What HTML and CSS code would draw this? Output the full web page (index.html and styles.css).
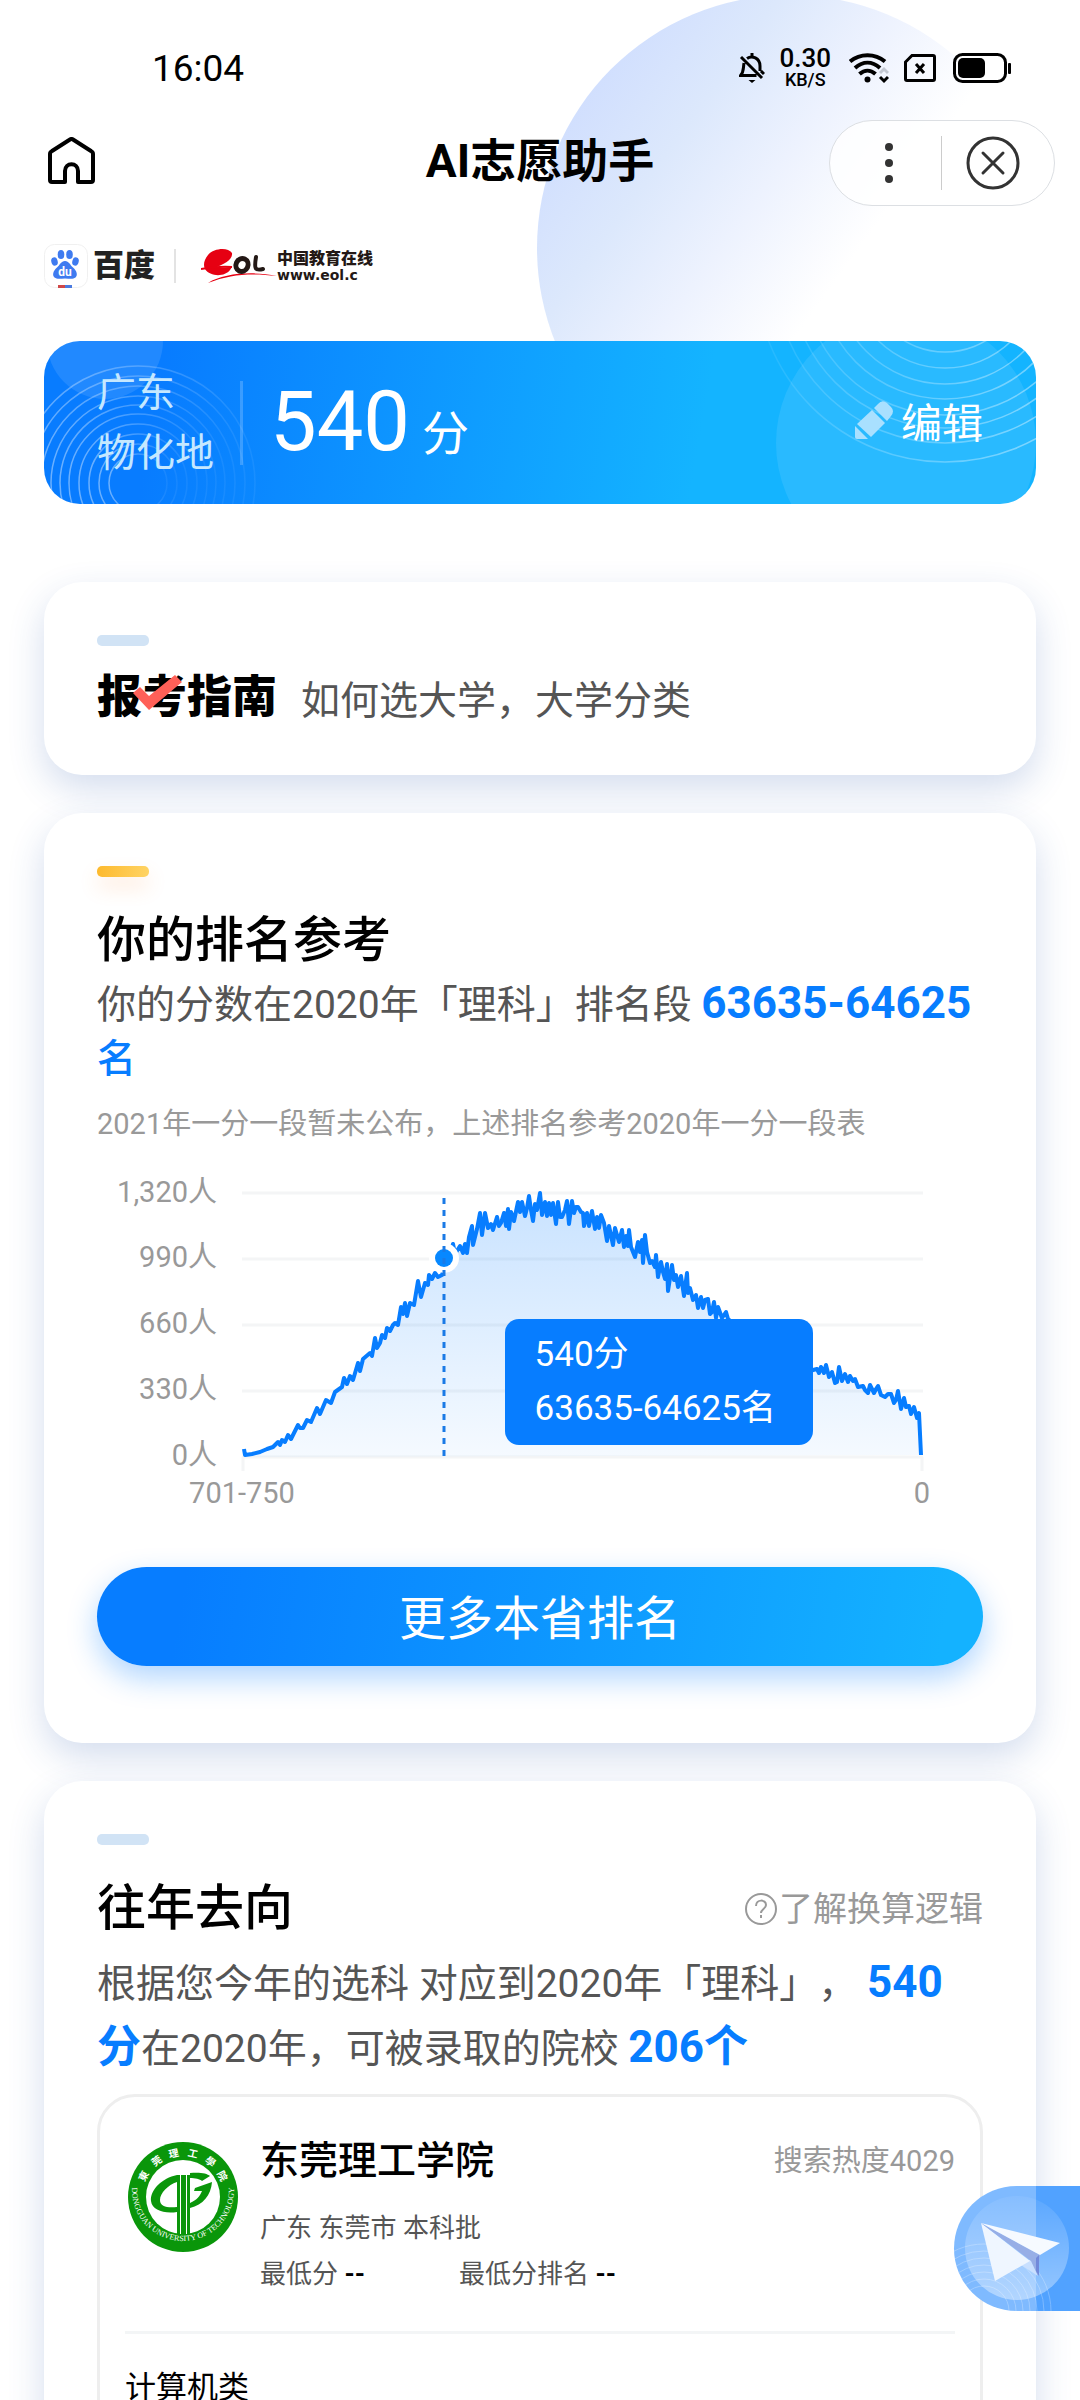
FILE: index.html
```
<!DOCTYPE html>
<html lang="zh-CN">
<head>
    <meta charset="UTF-8">
    <meta name="viewport" content="width=device-width, initial-scale=1.0">
    <title>AI志愿助手</title>
    <link rel="stylesheet" href="styles.css">
</head>
<body>
    <div class="page">
        <div class="page-glow"></div>

        <div class="status-bar">
            <span class="time">16:04</span>
            <div class="status-icons">
                <svg class="bell" width="26" height="32" viewBox="0 0 26 32" fill="none" stroke="#000" stroke-width="3">
                    <path d="M8 6.500C13 3 21 6 21 14v5M5 11c-1 6 0 9-3.500 12.500h16M2 5l21 21M25 22l-3-3M13 1v3"/>
                    <path d="M9.500 28h7l-3.500 3z" fill="#000" stroke="none"/>
                </svg>
                <div class="speed"><b>0.30</b><span>KB/S</span></div>
                <svg class="wifi" width="40" height="32" viewBox="0 0 40 32" fill="none" stroke="#000" stroke-width="4">
                    <path d="M1 9.500C11 1 26 1 36 9.500M6 16c8-7 17-7 25 0M10.500 22c5-4.500 11-4.500 16 0"/>
                    <circle cx="18.500" cy="27.500" r="3" fill="#000" stroke="none"/>
                    <path d="M31 21l4-4 4 4" stroke="#c3c8d2" stroke-width="3"/>
                    <path d="M31 25l4 4 4-4" stroke-width="3"/>
                </svg>
                <svg class="sim" width="32" height="28" viewBox="0 0 32 28" fill="none" stroke="#000" stroke-width="3">
                    <path d="M8 1.500h21q1.500 0 1.500 1.500v22q0 1.500-1.500 1.500H3q-1.500 0-1.500-1.500V8z"/>
                    <path d="M12 10l8 9M20 10l-8 9"/>
                </svg>
                <svg width="58" height="31" viewBox="0 0 58 31">
                    <rect x="1.500" y="1.500" width="51" height="27" rx="8" fill="none" stroke="#000" stroke-width="3"/>
                    <rect x="5" y="5" width="27" height="20" rx="5"/>
                    <rect x="55" y="10" width="3" height="11" rx="1"/>
                </svg>
            </div>
        </div>

        <header class="nav">
            <button class="home" aria-label="首页">
                <svg width="47" height="47" viewBox="0 0 47 47" fill="none" stroke="#000" stroke-width="4" stroke-linejoin="round">
                    <path d="M17 45H4q-2 0-2-2V17q0-2 2-3L22 2.500q1.500-1 3 0L43 14q2 1 2 3v26q0 2-2 2H30V34c0-9-13-9-13 0z"/>
                    <path d="M19 45.500h9" stroke="#fff" stroke-width="4"/>
                </svg>
            </button>
            <h1>AI志愿助手</h1>
            <div class="capsule">
                <button aria-label="更多">
                    <svg width="52" height="52" viewBox="0 0 52 52" fill="#333">
                        <circle cx="26" cy="10" r="4"/><circle cx="26" cy="26" r="4"/><circle cx="26" cy="42" r="4"/>
                    </svg>
                </button>
                <button aria-label="关闭">
                    <svg width="54" height="54" viewBox="0 0 54 54" fill="none" stroke="#333" stroke-width="3" stroke-linecap="round">
                        <circle cx="27" cy="27" r="25"/>
                        <path d="M17 17l20 20M37 17L17 37"/>
                    </svg>
                </button>
            </div>
        </header>

        <div class="brands">
            <svg width="44" height="44" viewBox="0 0 44 44">
                <rect x="0.500" y="0.500" width="43" height="43" rx="10" fill="#fff" stroke="#f0f0f0"/>
                <g fill="#3f7bf0">
                    <ellipse cx="17" cy="10.500" rx="3.300" ry="4.600"/>
                    <ellipse cx="25.500" cy="10.500" rx="3.300" ry="4.600"/>
                    <ellipse cx="10.500" cy="17.500" rx="3.200" ry="4.200" transform="rotate(-15 10.500 17.500)"/>
                    <ellipse cx="31.500" cy="17.500" rx="3.200" ry="4.200" transform="rotate(15 31.500 17.500)"/>
                    <path d="M21 17c4 0 5 4 8 6.500 4 3.500 5 7.500 2.500 10-2.500 2-6 1-10.500 1s-8 1-10.500-1C8 31 9 27 13 23.500c3-2.500 4-6.500 8-6.500z"/>
                </g>
                <text class="du" x="21" y="32">du</text>
                <path d="M14 42.500h7" stroke="#d04848" stroke-width="3"/>
                <path d="M21 42.500h7" stroke="#4a7be0" stroke-width="3"/>
            </svg>
            <span class="baidu">百度</span>
            <span class="brand-line"></span>
            <svg width="76" height="38" viewBox="0 0 76 38">
                <path d="M31 6C27 0 13 1 7 8c-4 5-5 10-3 14 5 8 20 8 25 1l2-3L14 21c9-4 18-8 17-15z" fill="#e60012"/>
                <path d="M0 22c12-2 20-3 31-2" fill="none" stroke="#e60012" stroke-width="2"/>
                <path d="M7 36c16-10 45-12 69-7-26-3-46-2-69 7z" fill="#e60012"/>
                <ellipse cx="41" cy="18" rx="6" ry="6.500" fill="none" stroke="#231815" stroke-width="5" transform="rotate(25 41 18)"/>
                <path d="M55 10c-2 12-1 14 7 12" fill="none" stroke="#231815" stroke-width="4" stroke-linecap="round"/>
            </svg>
            <span class="eol"><b>中国教育在线</b><span>www.eol.c</span></span>
        </div>

        <section class="score">
            <svg class="deco-left" width="220" height="164" viewBox="0 0 220 164" fill="none">
                <defs>
                    <linearGradient id="ringLeft">
                        <stop offset="0" stop-color="#fff" stop-opacity=".4"/>
                        <stop offset="1" stop-color="#fff" stop-opacity=".06"/>
                    </linearGradient>
                </defs>
                <circle cx="61" cy="0" r="58" fill="#fff" opacity=".1"/>
                <g stroke="url(#ringLeft)" stroke-width="1.500">
                    <circle cx="94" cy="142" r="29"/><circle cx="94" cy="142" r="39"/>
                    <circle cx="94" cy="142" r="49"/><circle cx="94" cy="142" r="59"/>
                    <circle cx="94" cy="142" r="69"/><circle cx="94" cy="142" r="78"/>
                    <circle cx="94" cy="142" r="87"/><circle cx="94" cy="142" r="97"/>
                    <circle cx="94" cy="142" r="107"/><circle cx="94" cy="142" r="117"/>
                </g>
            </svg>
            <svg class="deco-right" width="280" height="164" viewBox="0 0 280 164" fill="none">
                <defs>
                    <linearGradient id="ringRight" gradientUnits="userSpaceOnUse" x1="0" y1="0" x2="280" y2="0">
                        <stop offset="0" stop-color="#fff" stop-opacity=".06"/>
                        <stop offset="1" stop-color="#fff" stop-opacity=".4"/>
                    </linearGradient>
                </defs>
                <circle cx="150" cy="102" r="130" fill="#fff" opacity=".09"/>
                <g stroke="url(#ringRight)" stroke-width="1.500">
                    <circle cx="189" cy="-68" r="79"/><circle cx="189" cy="-68" r="95"/>
                    <circle cx="189" cy="-68" r="111"/><circle cx="189" cy="-68" r="126"/>
                    <circle cx="189" cy="-68" r="142"/><circle cx="189" cy="-68" r="155"/>
                    <circle cx="189" cy="-68" r="170"/><circle cx="189" cy="-68" r="189"/>
                </g>
            </svg>
            <div class="subject">广东<br>物化地</div>
            <div class="points"><strong>540</strong><span>分</span></div>
            <button class="edit">
                <svg width="38" height="38" viewBox="0 0 38 38" fill="#a9e0ff">
                    <path d="M19 7l4-4q4-5 9-1l4 4q4 4 0 9l-4 5z"/>
                    <path d="M17 9l13 13L16 36 2 23z"/>
                    <path d="M0 25l13 13H2q-2 0-2-2z"/>
                </svg>
                编辑
            </button>
        </section>

        <main>
            <section class="card guide">
                <i class="tag"></i>
                <div class="guide-row">
                    <h2>报考指南
                        <svg width="50" height="38" viewBox="0 0 50 38"><path d="M0 19l7-6 9 9L42 1l7 7-33 28z" fill="#ff6058"/></svg>
                    </h2>
                    <a href="#">如何选大学，大学分类</a>
                </div>
            </section>

            <section class="card rank">
                <i class="tag gold"></i>
                <h2>你的排名参考</h2>
                <p class="rank-text">你的分数在2020年「理科」排名段 <strong>63635-64625</strong><em>名</em></p>
                <p class="hint">2021年一分一段暂未公布，上述排名参考2020年一分一段表</p>
                <div class="chart">
                    <svg viewBox="0 0 886 356">
                        <defs>
                            <linearGradient id="area" x1="0" y1="0" x2="0" y2="1">
                                <stop offset="0" stop-color="#077dff" stop-opacity=".22"/>
                                <stop offset="1" stop-color="#077dff" stop-opacity=".04"/>
                            </linearGradient>
                        </defs>
                        <path class="grid" d="M145 33h681M145 99h681M145 165h681M145 231h681M145 297h681M146 297v14M825 297v14"/>
                        <g class="y-labels">
                            <text x="120" y="42">1,320人</text>
                            <text x="120" y="107">990人</text>
                            <text x="120" y="173">660人</text>
                            <text x="120" y="239">330人</text>
                            <text x="120" y="305">0人</text>
                        </g>
                        <g class="x-labels">
                            <text x="145" y="343">701-750</text>
                            <text x="825" y="343">0</text>
                        </g>
                        <path id="areaPath" fill="url(#area)"/>
                        <path id="linePath" class="curve"/>
                        <circle cx="347" cy="98" r="15" fill="#fff"/>
                        <circle cx="347" cy="98" r="9" fill="#0788ff"/>
                        <path class="marker" d="M347 38v258"/>
                    </svg>
                    <div class="tooltip">540分<br>63635-64625名</div>
                </div>
                <button class="more">更多本省排名</button>
            </section>

            <section class="card history">
                <i class="tag"></i>
                <div class="history-head">
                    <h2>往年去向</h2>
                    <a href="#">
                        <svg width="32" height="32" viewBox="0 0 32 32" fill="none" stroke="#999" stroke-width="2">
                            <circle cx="16" cy="16" r="15"/>
                            <path d="M11 13c0-7 10-7 10-1 0 4-5 4-5 8M16 22v3"/>
                        </svg>了解换算逻辑</a>
                </div>
                <p class="history-text">根据您今年的选科 对应到2020年「理科」， <strong>540分</strong>在2020年，可被录取的院校 <strong>206个</strong></p>

                <article class="school">
                    <div class="school-head">
                        <svg class="emblem" width="110" height="110" viewBox="0 0 110 110">
                            <defs><path id="ring" d="M4 48a51 51 0 1 0 102 0"/></defs>
                            <circle cx="55" cy="55" r="55" fill="#0a960a"/>
                            <circle cx="55" cy="55" r="37" fill="#fff"/>
                            <g class="seal-cn">
                                <text x="55" y="14" transform="rotate(-62 55 55)">東</text>
                                <text x="55" y="14" transform="rotate(-36 55 55)">莞</text>
                                <text x="55" y="14" transform="rotate(-12 55 55)">理</text>
                                <text x="55" y="14" transform="rotate(13 55 55)">工</text>
                                <text x="55" y="14" transform="rotate(38 55 55)">學</text>
                                <text x="55" y="14" transform="rotate(62 55 55)">院</text>
                            </g>
                            <text class="seal-en"><textPath href="#ring" startOffset="50%">DONGGUAN UNIVERSITY OF TECHNOLOGY</textPath></text>
                            <g fill="#0a960a">
                                <path d="M49 33C34 36 22 48 23 59c1 9 13 13 26 11v-5c-9 1-17 0-17-7 0-7 8-15 17-18z"/>
                                <path d="M49 33h13v59H49z"/>
                                <path d="M62 31c9-1 17 0 20 3l-8 5c-2-2-7-3-12-3z"/>
                                <path d="M67 46l17-6c-1 13-9 23-22 26v-5c7-3 10-7 12-12h-8z"/>
                            </g>
                            <path d="M52.500 32v60M58.500 32v60" stroke="#fff" stroke-width="1"/>
                        </svg>
                        <div class="school-info">
                            <div class="school-title">
                                <h3>东莞理工学院</h3>
                                <span>搜索热度4029</span>
                            </div>
                            <p>广东 东莞市 本科批</p>
                            <div class="school-score">
                                <span>最低分 <b>--</b></span>
                                <span>最低分排名 <b>--</b></span>
                            </div>
                        </div>
                    </div>
                    <h4>计算机类</h4>
                </article>
            </section>
        </main>

        <button class="float" aria-label="分享">
            <svg width="126" height="125" viewBox="0 0 126 125">
                <defs>
                    <linearGradient id="disc" x1="0" y1="0" x2="0" y2="1">
                        <stop offset="0" stop-color="#fff" stop-opacity=".06"/>
                        <stop offset="1" stop-color="#fff" stop-opacity=".4"/>
                    </linearGradient>
                </defs>
                <g fill="none" stroke="#fff" opacity=".25">
                    <circle cx="30" cy="125" r="25"/><circle cx="30" cy="125" r="32"/><circle cx="30" cy="125" r="39"/>
                    <circle cx="30" cy="125" r="46"/><circle cx="30" cy="125" r="53"/><circle cx="30" cy="125" r="60"/><circle cx="30" cy="125" r="67"/>
                </g>
                <circle cx="63" cy="62" r="52" fill="url(#disc)"/>
                <path d="M67 79l10-6 7 17z" fill="#c9e0ff"/>
                <path d="M27 37l49 38-35 20z" fill="#eff6ff"/>
                <path d="M27 37l59 32-2 21-7-15z" fill="#97aee6"/>
                <path d="M85 69v21l-3-5V72z" fill="#7189da"/>
                <path d="M27 37l79 20-20 12z" fill="#f6faff"/>
            </svg>
        </button>
    </div>

    <script>
        // score distribution, from the highest band down to 0
        const points = [
            [147,289],[148,295],[155,294],[163,292],[170,289],[176,287],[181,282],[183,285],[185,280],[188,282],[191,275],[194,279],
            [201,265],[203,268],[206,268],[210,260],[214,262],[220,248],[223,254],[229,240],[234,243],[238,232],[245,227],[247,218],
            [250,224],[253,216],[256,220],[261,203],[263,211],[266,199],[273,193],[275,196],[278,178],[280,188],[283,183],[285,175],[288,178],
            [290,168],[293,171],[296,165],[298,163],[301,165],[304,147],[306,154],[308,143],[310,156],[313,143],[317,145],[321,121],[324,137],
            [328,123],[331,125],[332,115],[335,119],[338,113],[341,117],[345,115],[356,84],[358,94],[363,86],[366,93],[368,84],[370,93],
            [372,77],[375,66],[376,85],[380,69],[383,53],[385,75],[388,53],[391,68],[394,64],[396,70],[400,57],[402,66],[404,63],
            [407,53],[409,66],[411,49],[412,69],[414,52],[417,61],[421,42],[423,52],[425,42],[428,56],[430,48],[432,36],[434,50],
            [436,61],[438,44],[440,50],[443,33],[445,55],[448,42],[450,56],[452,43],[454,55],[456,43],[459,64],[461,42],[463,57],
            [465,57],[468,50],[470,41],[472,64],[475,41],[477,53],[479,47],[481,47],[484,52],[486,53],[487,66],[490,53],[492,66],
            [495,51],[498,69],[500,57],[502,68],[504,55],[507,63],[510,81],[512,66],[516,85],[518,68],[522,82],[525,70],[527,87],
            [529,76],[531,86],[532,70],[534,87],[538,97],[541,82],[543,92],[545,80],[546,103],[548,75],[550,92],[553,103],[555,101],
            [558,107],[559,95],[561,117],[564,102],[566,112],[568,119],[570,104],[571,131],[575,105],[577,120],[579,115],[581,127],
            [584,116],[587,136],[590,113],[591,133],[593,128],[596,140],[599,135],[601,148],[604,137],[606,148],[608,140],[611,139],
            [613,154],[615,152],[617,142],[619,158],[621,147],[625,158],[629,152],[631,159],[640,166],[653,177],[670,188],[688,198],
            [713,211],[716,210],[720,209],[722,213],[724,207],[727,213],[729,205],[732,217],[735,212],[738,223],[740,222],[742,207],
            [745,221],[748,214],[751,222],[753,216],[756,221],[758,219],[761,227],[766,226],[768,230],[771,233],[773,225],[777,233],
            [779,229],[781,226],[784,235],[788,237],[791,234],[794,234],[797,243],[799,240],[801,231],[804,249],[807,238],[809,247],
            [812,246],[814,254],[817,247],[820,258],[822,253],[824,295]
        ];
        const line = 'M' + points.map(p => p.join(' ')).join('L');
        document.getElementById('linePath').setAttribute('d', line);
        document.getElementById('areaPath').setAttribute('d', line + 'L147 297Z');
    </script>
</body>
</html>
```

FILE: styles.css
```
* {
    box-sizing: border-box;
    margin: 0;
    padding: 0;
}
body {
    font-family: Roboto, "Noto Sans CJK SC", sans-serif;
    text-spacing-trim: space-all;
    background: #fff;
    color: #000;
    height: 100vh;
    overflow: hidden;
}
button {
    font: inherit;
    border: none;
    background: none;
    cursor: pointer;
}
a {
    text-decoration: none;
}
svg {
    display: block;
    flex: none;
}
.page {
    position: relative;
    height: 100%;
    overflow: hidden;
}
.page-glow {
    position: absolute;
    top: -5px;
    right: 37px;
    width: 506px;
    height: 506px;
    border-radius: 50%;
    background: linear-gradient(126deg, #d1dffe 14%, #dce8fc 28%, #edf2fe 42%, #fff 58%);
    z-index: -1;
}

/* status bar */
.status-bar {
    display: flex;
    align-items: center;
    justify-content: space-between;
    height: 106px;
    padding: 30px 69px 0 152px;
}
.time {
    font-size: 37px;
}
.status-icons {
    display: flex;
    align-items: center;
}
.speed {
    display: flex;
    flex-direction: column;
    align-items: center;
    margin: 0 18px 0 14px;
    font-weight: 500;
}
.speed b {
    font-size: 26px;
    font-weight: 500;
    line-height: 24px;
}
.speed span {
    font-size: 18px;
    line-height: 20px;
}
.wifi {
    margin-right: 15px;
}
.sim {
    margin-right: 17px;
}

/* title bar */
.nav {
    display: grid;
    grid-template-columns: 1fr auto 1fr;
    align-items: center;
    height: 114px;
    padding: 0 25px;
}
.nav h1 {
    padding-bottom: 4px;
    font-size: 46px;
    font-weight: 700;
    line-height: 60px;
}
.home {
    justify-self: start;
    padding-bottom: 6px;
    margin-left: 23px;
}
.capsule {
    justify-self: end;
    display: flex;
    align-items: center;
    width: 226px;
    height: 86px;
    padding: 0 10px 0 8px;
    border: 1px solid #dcdfe3;
    border-radius: 43px;
    background: rgba(255, 255, 255, .8);
}
.capsule button {
    flex: 1;
    display: flex;
    justify-content: center;
}
.capsule button + button {
    border-left: 1px solid #ccc;
}

.brands {
    display: flex;
    align-items: center;
    height: 44px;
    margin: 24px 44px 0;
}
.du {
    font: bold 12px Roboto, sans-serif;
    fill: #fff;
    text-anchor: middle;
}
.baidu {
    margin-left: 5px;
    font-size: 31px;
    font-weight: 900;
    line-height: 44px;
    color: #222;
}
.brand-line {
    width: 2px;
    height: 34px;
    margin: 0 25px 0 19px;
    background: #e3e3e3;
}
.eol {
    display: flex;
    flex-direction: column;
    color: #231815;
    font-weight: 700;
}
.eol b {
    font-size: 16px;
    line-height: 18px;
}
.eol span {
    font: bold 14px/14px "DejaVu Sans", sans-serif;
}

/* score banner */
.score {
    position: relative;
    display: flex;
    align-items: center;
    height: 163px;
    margin: 53px 44px 0;
    padding: 0 53px;
    border-radius: 36px;
    overflow: hidden;
    background: linear-gradient(100deg, #087cff 12%, #14b4ff 66%);
    color: #fff;
}
.deco-left,
.deco-right {
    position: absolute;
    top: 0;
}
.deco-left {
    left: 0;
}
.deco-right {
    right: 0;
}
.subject {
    position: relative;
    width: 143px;
    font-size: 39px;
    line-height: 60px;
    color: #c5e8ff;
}
.points {
    position: relative;
    display: flex;
    align-items: baseline;
    height: 84px;
    padding-left: 27px;
    border-left: 3px solid rgba(255, 255, 255, .2);
    line-height: 82px;
}
.points strong {
    font-size: 83px;
    font-weight: 400;
}
.points span {
    margin-left: 12px;
    font-size: 47px;
}
.edit {
    position: relative;
    display: flex;
    align-items: center;
    gap: 8px;
    margin-left: auto;
    padding-bottom: 6px;
    font-size: 41px;
    color: #fff;
}

/* cards */
main {
    display: flex;
    flex-direction: column;
    gap: 38px;
    padding: 78px 44px 0;
}
.card {
    position: relative;
    padding: 53px 53px 0;
    border-radius: 38px;
    background: #fff;
    box-shadow: 0 14px 36px rgba(40, 85, 170, .2);
}
.card h2 {
    font-size: 49px;
    font-weight: 500;
    line-height: 74px;
}
.tag {
    display: block;
    width: 52px;
    height: 11px;
    margin-bottom: 27px;
    border-radius: 5px;
    background: #d1e3f5;
}
.tag.gold {
    background: linear-gradient(100deg, #fdb92c, #ffd465);
    box-shadow: 0 10px 20px rgba(255, 140, 60, .2);
}

.guide {
    height: 193px;
}
.guide-row {
    display: flex;
    align-items: center;
    gap: 24px;
    margin-top: -12px;
}
.guide h2 {
    position: relative;
    font-size: 45px;
    font-weight: 900;
}
.guide h2 svg {
    position: absolute;
    left: 36px;
    top: 13px;
}
.guide a {
    padding-bottom: 2px;
    font-size: 39px;
    color: #555;
}

.rank {
    padding-bottom: 77px;
}
.rank-text,
.history-text {
    font-size: 39px;
    color: #555;
}
.rank-text {
    line-height: 54px;
}
.rank-text strong,
.history-text strong {
    font-size: 44px;
    font-weight: 700;
    line-height: 44px;
    color: #077dff;
}
.rank-text em {
    font-style: normal;
    font-weight: 500;
    color: #077dff;
}
.hint {
    margin-top: 18px;
    font-size: 29px;
    line-height: 40px;
    color: #999;
}
.chart {
    position: relative;
    margin-top: 16px;
}
.chart svg {
    width: 100%;
}
.grid {
    fill: none;
    stroke: #f4f5f6;
    stroke-width: 3;
}
.y-labels,
.x-labels {
    font-size: 29px;
    fill: #999;
}
.y-labels {
    text-anchor: end;
}
.x-labels {
    text-anchor: middle;
}
.curve {
    fill: none;
    stroke: #077dff;
    stroke-width: 4;
    stroke-linejoin: round;
}
.marker {
    stroke: #1a7ae6;
    stroke-width: 3;
    stroke-dasharray: 6 6;
}
.tooltip {
    position: absolute;
    left: 46%;
    top: 159px;
    width: 308px;
    padding: 9px 30px;
    border-radius: 14px;
    background: #077dff;
    color: #fff;
    font-size: 35px;
    line-height: 54px;
    white-space: nowrap;
}
.more {
    display: block;
    width: 100%;
    height: 99px;
    margin-top: 51px;
    padding-bottom: 4px;
    border-radius: 50px;
    background: linear-gradient(100deg, #077dff 10%, #14b2ff 95%);
    box-shadow: 0 12px 30px rgba(7, 125, 255, .32);
    color: #fff;
    font-size: 47px;
}

.history-head {
    display: flex;
    align-items: center;
    justify-content: space-between;
}
.history-head a {
    display: flex;
    align-items: center;
    gap: 2px;
    font-size: 34px;
    line-height: 72px;
    color: #999;
}
.history-text {
    margin-top: 6px;
    line-height: 65px;
}
.school {
    height: 480px;
    margin-top: 12px;
    padding: 42px 25px 0;
    border: 3px solid #eee;
    border-radius: 38px;
}
.school-head {
    display: flex;
    padding-bottom: 34px;
    border-bottom: 3px solid #f3f5f6;
}
.emblem {
    margin: 3px 22px 0 3px;
}
.seal-cn {
    font-size: 10px;
    font-weight: 700;
    fill: #fff;
    text-anchor: middle;
}
.seal-en {
    font: 8px "Liberation Serif", serif;
    fill: #fff;
    text-anchor: middle;
}
.school-info {
    flex: 1;
    font-size: 26px;
    line-height: 46px;
    color: #555;
}
.school-title {
    display: flex;
    align-items: center;
    justify-content: space-between;
    margin-bottom: 22px;
    line-height: 44px;
}
.school-title h3 {
    font-size: 39px;
    font-weight: 500;
    color: #000;
}
.school-title span {
    font-size: 29px;
    color: #999;
}
.school-score {
    display: flex;
    gap: 94px;
}
.school-score b {
    color: #000;
}
.school h4 {
    margin-top: 32px;
    font-size: 31px;
    font-weight: 400;
    line-height: 44px;
}

/* floating button, stuck to the right edge */
.float {
    position: absolute;
    right: 0;
    bottom: 89px;
    border-radius: 63px 0 0 63px;
    overflow: hidden;
    background: linear-gradient(90deg, #7fbaff 82px, #51a2ff 82px);
}
```
